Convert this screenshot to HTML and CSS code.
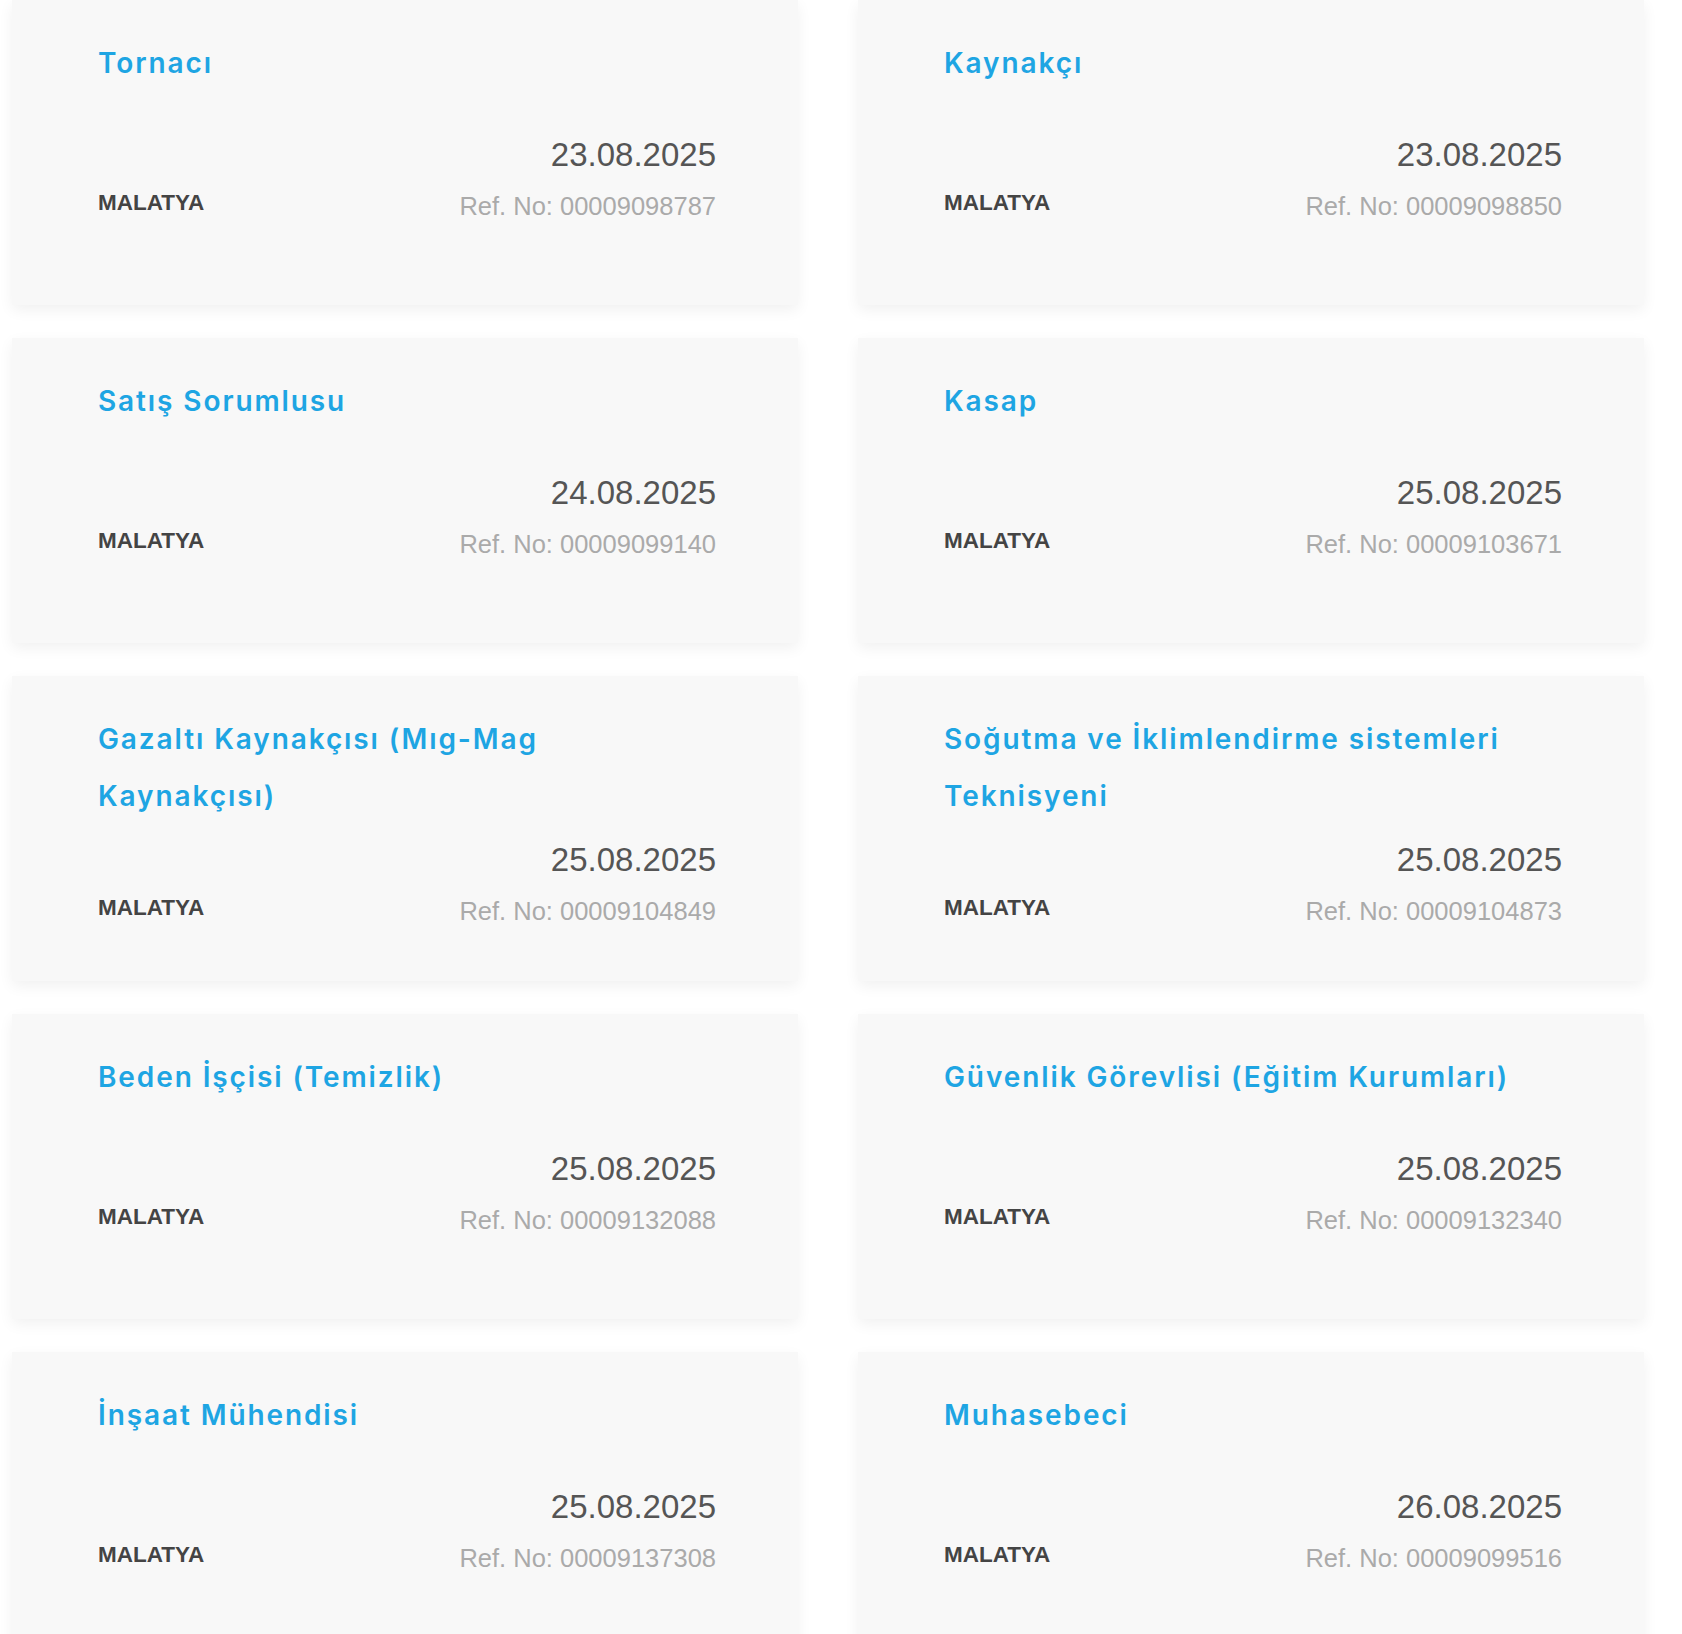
FILE: index.html
```html
<!DOCTYPE html>
<html lang="tr">
<head>
  <meta charset="UTF-8">
  <meta name="viewport" content="width=device-width, initial-scale=1.0">
  <title>İş İlanları</title>
  <link rel="stylesheet" href="styles.css">
</head>
<body>
  <div class="job-grid">
    <div class="job-card">
      <h3 class="job-title">Tornacı</h3>
      <div class="job-footer">
        <span class="job-city">MALATYA</span>
        <div class="job-meta">
          <div class="job-date">23.08.2025</div>
          <div class="job-ref">Ref. No: 00009098787</div>
        </div>
      </div>
    </div>
    <div class="job-card">
      <h3 class="job-title">Kaynakçı</h3>
      <div class="job-footer">
        <span class="job-city">MALATYA</span>
        <div class="job-meta">
          <div class="job-date">23.08.2025</div>
          <div class="job-ref">Ref. No: 00009098850</div>
        </div>
      </div>
    </div>
    <div class="job-card">
      <h3 class="job-title">Satış Sorumlusu</h3>
      <div class="job-footer">
        <span class="job-city">MALATYA</span>
        <div class="job-meta">
          <div class="job-date">24.08.2025</div>
          <div class="job-ref">Ref. No: 00009099140</div>
        </div>
      </div>
    </div>
    <div class="job-card">
      <h3 class="job-title">Kasap</h3>
      <div class="job-footer">
        <span class="job-city">MALATYA</span>
        <div class="job-meta">
          <div class="job-date">25.08.2025</div>
          <div class="job-ref">Ref. No: 00009103671</div>
        </div>
      </div>
    </div>
    <div class="job-card">
      <h3 class="job-title">Gazaltı Kaynakçısı (Mıg-Mag Kaynakçısı)</h3>
      <div class="job-footer">
        <span class="job-city">MALATYA</span>
        <div class="job-meta">
          <div class="job-date">25.08.2025</div>
          <div class="job-ref">Ref. No: 00009104849</div>
        </div>
      </div>
    </div>
    <div class="job-card">
      <h3 class="job-title">Soğutma ve İklimlendirme sistemleri Teknisyeni</h3>
      <div class="job-footer">
        <span class="job-city">MALATYA</span>
        <div class="job-meta">
          <div class="job-date">25.08.2025</div>
          <div class="job-ref">Ref. No: 00009104873</div>
        </div>
      </div>
    </div>
    <div class="job-card">
      <h3 class="job-title">Beden İşçisi (Temizlik)</h3>
      <div class="job-footer">
        <span class="job-city">MALATYA</span>
        <div class="job-meta">
          <div class="job-date">25.08.2025</div>
          <div class="job-ref">Ref. No: 00009132088</div>
        </div>
      </div>
    </div>
    <div class="job-card">
      <h3 class="job-title">Güvenlik Görevlisi (Eğitim Kurumları)</h3>
      <div class="job-footer">
        <span class="job-city">MALATYA</span>
        <div class="job-meta">
          <div class="job-date">25.08.2025</div>
          <div class="job-ref">Ref. No: 00009132340</div>
        </div>
      </div>
    </div>
    <div class="job-card">
      <h3 class="job-title">İnşaat Mühendisi</h3>
      <div class="job-footer">
        <span class="job-city">MALATYA</span>
        <div class="job-meta">
          <div class="job-date">25.08.2025</div>
          <div class="job-ref">Ref. No: 00009137308</div>
        </div>
      </div>
    </div>
    <div class="job-card">
      <h3 class="job-title">Muhasebeci</h3>
      <div class="job-footer">
        <span class="job-city">MALATYA</span>
        <div class="job-meta">
          <div class="job-date">26.08.2025</div>
          <div class="job-ref">Ref. No: 00009099516</div>
        </div>
      </div>
    </div>
  </div>
</body>
</html>
```

FILE: styles.css
```css
body {
  margin: 0;
  padding: 0;
  background-color: #ffffff;
  font-family: "Liberation Sans", Arial, sans-serif;
}
.job-grid {
  display: grid;
  grid-template-columns: 786px 786px;
  column-gap: 60px;
  row-gap: 33px;
  padding: 0 0 40px 12px;
}
.job-card {
  height: 305px;
  box-sizing: border-box;
  padding: 35px 82px 0 86px;
  background-color: #f8f8f8;
  box-shadow: 0 5px 14px rgba(0, 0, 0, 0.06);
}
.job-title {
  margin: 0;
  padding-right: 30px;
  min-height: 85px;
  font-family: Inter, "Noto Sans", sans-serif;
  font-size: 28px;
  font-weight: 600;
  line-height: 57px;
  color: #1ea5e3;
  letter-spacing: 1.9px;
}
.job-footer {
  display: flex;
  justify-content: space-between;
  align-items: flex-end;
  margin-top: 15px;
}
.job-city {
  font-size: 22.5px;
  font-weight: bold;
  color: #444;
  line-height: 30px;
  margin-bottom: 3px;
}
.job-meta {
  text-align: right;
}
.job-date {
  font-size: 33px;
  color: #555;
  line-height: 40px;
  margin-bottom: 16px;
}
.job-ref {
  font-size: 25.5px;
  color: #aaa;
  line-height: 30px;
}
```
